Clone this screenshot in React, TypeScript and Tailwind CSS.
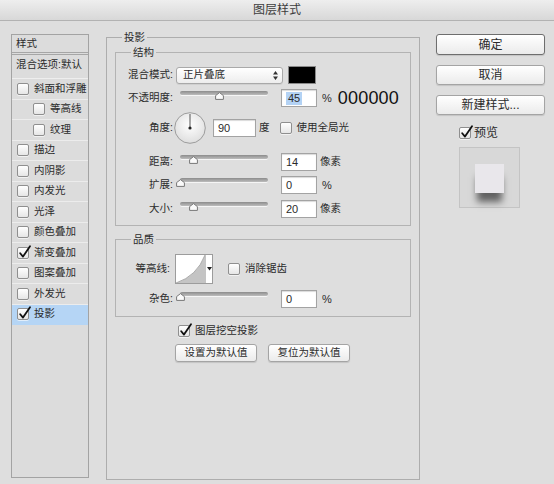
import React from "react"

const Check = ({ checked = false }: { checked?: boolean }) => (
    <span className="relative inline-block w-[12px] h-[12px] shrink-0 rounded-[2px] border border-[#8f8f8f] bg-linear-to-b from-white to-[#e6e6e6] shadow-[0_1px_0_rgba(255,255,255,0.6)]">
        {checked && (
            <svg className="absolute left-[0px] top-[-3px]" width="14" height="14" viewBox="0 0 14 14">
                <path d="M2.2 8.2 L5 11.6 L12 1.2" fill="none" stroke="#111" strokeWidth="1.8" strokeLinecap="round" strokeLinejoin="round" />
            </svg>
        )}
    </span>
)

const Slider = ({ pos }: { pos: number }) => (
    <div className="relative w-[88px] h-[18px] ml-[7px] shrink-0">
        <div className="absolute left-0 right-0 top-[2px] h-[4px] rounded-full bg-linear-to-b from-[#8c8c8c] to-[#bdbdbd] shadow-[0_1px_0_rgba(255,255,255,0.7)]" />
        <svg style={{ left: pos - 4 }} className="absolute top-[3px]" width="9" height="8" viewBox="0 0 9 8">
            <path d="M4.5 0.6 L8.4 3.6 L8.4 7.4 L0.6 7.4 L0.6 3.6 Z" fill="#fafafa" stroke="#777" strokeWidth="1" strokeLinejoin="round" />
        </svg>
    </div>
)

const Label = ({ children, extra = "" }: { children: React.ReactNode, extra?: string }) => (
    <span className={"w-[57px] shrink-0 text-right " + extra}>{children}</span>
)

const NumBox = ({ children, className = "" }: { children: React.ReactNode, className?: string }) => (
    <div className={"h-[18px] w-[36px] shrink-0 bg-white border border-[#a3a3a3] shadow-[inset_0_1px_1px_rgba(0,0,0,0.15)] pl-[4px] flex items-center text-[11px] " + className}>
        {children}
    </div>
)

const Btn = ({ children, className = "" }: { children: React.ReactNode, className?: string }) => (
    <div className={"flex items-center justify-center rounded-[3px] border bg-linear-to-b from-white to-[#ebebeb] shadow-[0_1px_1px_rgba(0,0,0,0.12)] " + className}>
        {children}
    </div>
)

const items: { label: string, checked?: boolean, indent?: boolean, active?: boolean }[] = [
    { label: "斜面和浮雕" },
    { label: "等高线", indent: true },
    { label: "纹理", indent: true },
    { label: "描边" },
    { label: "内阴影" },
    { label: "内发光" },
    { label: "光泽" },
    { label: "颜色叠加" },
    { label: "渐变叠加", checked: true },
    { label: "图案叠加" },
    { label: "外发光" },
    { label: "投影", checked: true, active: true },
]

const LeftPanel = () => (
    <div className="w-[78px] shrink-0 mt-[4px] mb-[2px] border border-[#a3a3a3] bg-[#dcdcdc] flex flex-col text-[10.5px]">
        <div className="h-[20px] border-b-[3px] border-double border-[#a6a6a6] pl-[4px] flex items-center">样式</div>
        <div className="h-[24px] pb-[3px] border-b border-[#eeeeee] pl-[4px] flex items-center whitespace-nowrap">混合选项:默认</div>
        {items.map((it) => (
            <div
                key={it.label}
                className={
                    "h-[20.5px] border-b flex items-center gap-[5px] whitespace-nowrap " +
                    (it.indent ? "pl-[21px] " : "pl-[5px] ") +
                    (it.active ? "bg-[#b5d5f5] border-[#b5d5f5]" : "border-[#ececec]")
                }
            >
                <Check checked={it.checked} />
                <span>{it.label}</span>
            </div>
        ))}
    </div>
)

const Dial = () => (
    <svg className="ml-[1px] shrink-0" width="32" height="32" viewBox="0 0 32 32">
        <defs>
            <radialGradient id="dialg" cx="50%" cy="40%" r="60%">
                <stop offset="0%" stopColor="#ffffff" />
                <stop offset="100%" stopColor="#dedede" />
            </radialGradient>
        </defs>
        <circle cx="16" cy="16" r="15.3" fill="url(#dialg)" stroke="#9c9c9c" strokeWidth="1" />
        <line x1="16" y1="16" x2="16" y2="2" stroke="#555" strokeWidth="1" />
        <circle cx="16" cy="16" r="1.6" fill="#222" />
    </svg>
)

const MainPanel = () => (
    <fieldset className="ml-[17px] w-[314px] shrink-0 border border-[#adadad] px-[8px] pt-[1px] min-w-0 text-[10.5px]">
        <legend className="ml-[7px] px-[2px] leading-[14px]">投影</legend>

        <fieldset className="border border-[#b3b3b3] pb-[7px] min-w-0">
            <legend className="ml-[15px] px-[2px] leading-[14px]">结构</legend>

            <div className="flex items-center h-[18px] mt-[7px]">
                <Label>混合模式:</Label>
                <div className="ml-[3px] w-[107px] h-[17px] shrink-0 rounded-[3px] border border-[#a9a9a9] bg-linear-to-b from-white to-[#ededed] shadow-[0_1px_0_rgba(0,0,0,0.06)] flex items-center justify-between pl-[6px] pr-[4px]">
                    <span>正片叠底</span>
                    <svg width="5" height="9" viewBox="0 0 5 9">
                        <path d="M2.5 0 L5 3.4 H0 Z M2.5 9 L5 5.6 H0 Z" fill="#333" />
                    </svg>
                </div>
                <div className="ml-[5px] w-[28px] h-[18px] shrink-0 bg-black border border-[#8a8a8a]" />
            </div>

            <div className="flex items-center h-[18px] mt-[5px]">
                <Label>不透明度:</Label>
                <Slider pos={39} />
                <NumBox className="ml-[13px] pl-[2px] border-[#6c9ddf] shadow-[0_0_0_2px_rgba(112,160,228,0.55)]">
                    <span className="bg-[#b3d2f4] px-[2px] leading-[13px]">45</span>
                </NumBox>
                <span className="ml-[5px] text-[11px]">%</span>
                <span className="ml-[6px] text-[18px] leading-none text-[#111] tracking-[0.2px]">000000</span>
            </div>

            <div className="flex items-center h-[32px] mt-[5px]">
                <Label>角度:</Label>
                <Dial />
                <NumBox className="ml-[7px] w-[43px] h-[17px]">90</NumBox>
                <span className="ml-[3px]">度</span>
                <span className="ml-[10px] flex"><Check /></span>
                <span className="ml-[5px] whitespace-nowrap">使用全局光</span>
            </div>

            <div className="flex items-center h-[18px] mt-[9px]">
                <Label>距离:</Label>
                <Slider pos={13} />
                <NumBox className="ml-[13px]">14</NumBox>
                <span className="ml-[3px]">像素</span>
            </div>

            <div className="flex items-center h-[18px] mt-[5px]">
                <Label>扩展:</Label>
                <Slider pos={0} />
                <NumBox className="ml-[13px]">0</NumBox>
                <span className="ml-[5px] text-[11px]">%</span>
            </div>

            <div className="flex items-center h-[18px] mt-[6px]">
                <Label>大小:</Label>
                <Slider pos={13} />
                <NumBox className="ml-[13px]">20</NumBox>
                <span className="ml-[3px]">像素</span>
            </div>
        </fieldset>

        <fieldset className="mt-[6px] border border-[#b3b3b3] pb-[8px] min-w-0">
            <legend className="ml-[15px] px-[2px] leading-[14px]">品质</legend>

            <div className="flex items-center h-[31px] mt-[7px]">
                <Label extra="pr-[3px]">等高线:</Label>
                <div className="ml-[2px] h-[30px] w-[38px] shrink-0 flex border border-[#9c9c9c] bg-white">
                    <svg width="29" height="28" viewBox="0 0 29 28">
                        <path d="M0 28 Q 21 21 29 0 L29 28 Z" fill="#c4c4c4" />
                        <path d="M0 28 Q 21 21 29 0" fill="none" stroke="#9a9a9a" strokeWidth="0.8" />
                    </svg>
                    <div className="flex-1 border-l border-[#c4c4c4] flex items-center justify-center">
                        <svg width="5" height="4" viewBox="0 0 5 4"><path d="M0 0 H5 L2.5 3.5 Z" fill="#222" /></svg>
                    </div>
                </div>
                <span className="ml-[15px] flex"><Check /></span>
                <span className="ml-[5px] whitespace-nowrap">消除锯齿</span>
            </div>

            <div className="flex items-center h-[18px] mt-[6px]">
                <Label>杂色:</Label>
                <Slider pos={0} />
                <NumBox className="ml-[13px]">0</NumBox>
                <span className="ml-[5px] text-[11px]">%</span>
            </div>
        </fieldset>

        <div className="flex items-center mt-[8px] ml-[63px] h-[12px]">
            <Check checked />
            <span className="ml-[5px] whitespace-nowrap">图层挖空投影</span>
        </div>

        <div className="flex mt-[7px] ml-[60px] gap-[11px]">
            <Btn className="w-[82px] h-[18px] border-[#a4a4a4]">设置为默认值</Btn>
            <Btn className="w-[82px] h-[18px] border-[#a4a4a4]">复位为默认值</Btn>
        </div>
    </fieldset>
)

const RightColumn = () => (
    <div className="ml-[16px] mt-[4px] w-[109px] shrink-0 self-start flex flex-col text-[12px]">
        <Btn className="h-[21px] border-[#6e6e6e]">确定</Btn>
        <Btn className="h-[20px] mt-[10px] border-[#a4a4a4]">取消</Btn>
        <Btn className="h-[20px] mt-[10px] border-[#a4a4a4]">新建样式...</Btn>
        <div className="flex items-center h-[12px] mt-[12px] ml-[23px] gap-[3px]">
            <Check checked />
            <span>预览</span>
        </div>
        <div className="mt-[8px] ml-[23px] w-[61px] h-[61px] border border-[#c4c4c4] bg-[#d8d8d8] flex justify-center pt-[16px]">
            <div className="w-[29px] h-[29px] bg-[#e9e7eb] shadow-[0_11px_7px_-2px_rgba(0,0,0,0.55)]" />
        </div>
    </div>
)

export default function App() {
    return (
        <div className="w-[554px] h-[484px] bg-[#dedede] flex flex-col overflow-hidden text-[#2b2b2b] font-['Liberation_Sans','Noto_Sans_CJK_SC',sans-serif]">
            <div className="h-[21px] shrink-0 flex items-center justify-center bg-linear-to-b from-[#eeeeee] to-[#d8d8d8] border-b border-[#b2b2b2] text-[12px] text-[#3c3c3c]">
                图层样式
            </div>
            <div className="flex-1 flex pt-[9px] pb-[4px] pl-[11px]">
                <LeftPanel />
                <MainPanel />
                <RightColumn />
            </div>
        </div>
    )
}
